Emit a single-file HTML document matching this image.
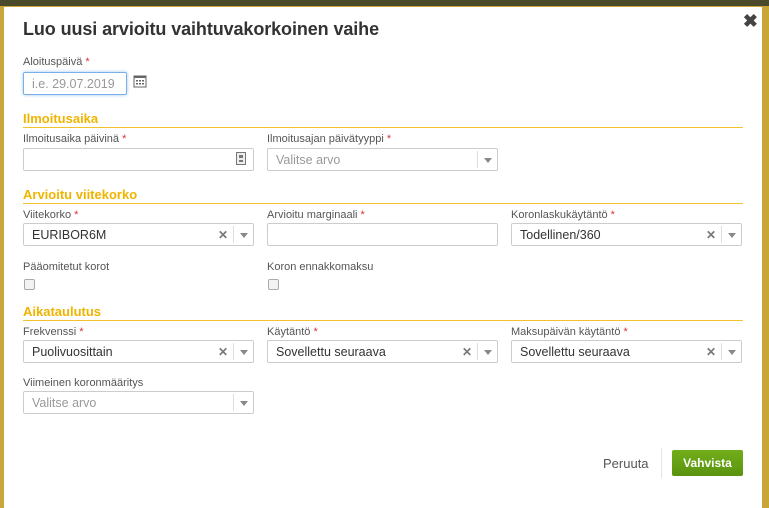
<!DOCTYPE html>
<html><head><meta charset="utf-8"><style>
*{box-sizing:border-box;margin:0;padding:0}
body{width:769px;height:508px;overflow:hidden;background:#c9a63a;font-family:"Liberation Sans",Arial,sans-serif;position:relative}
.top{position:absolute;left:0;top:0;width:769px;height:6px;background:#4a4a2a}
.modal{position:absolute;left:4px;top:7px;width:758px;height:501px;background:#fff}
.a{position:absolute}
h1{position:absolute;left:19px;top:12px;font-size:18px;font-weight:bold;color:#333;letter-spacing:-.1px}
.lbl{position:absolute;font-size:11px;color:#555}
.lbl i{color:#d33;font-style:normal}
.in{position:absolute;height:23px;border:1px solid #ccc;border-radius:2px;background:#fff;font-size:12.5px;color:#333;padding:4px 8px;line-height:14px}
.ph{color:#999}
.sec{position:absolute;left:19px;width:720px;font-size:13px;font-weight:bold;color:#f0b400;height:17px}
.sec:after{content:"";position:absolute;left:0;right:0;bottom:0;height:1px;background:#f2c22c}
.x{position:absolute;right:25px;top:4px;font-size:12px;font-weight:bold;color:#777}
.dd{position:absolute;right:0;top:2px;width:20px;height:17px;border-left:1px solid #ddd}
.dd:after{content:"";position:absolute;left:6px;top:7px;border:4px solid transparent;border-top:5px solid #888;border-bottom:0}
.cb{position:absolute;width:11px;height:11px;border:1px solid #aaa;border-radius:2px;background:#f3f3f3}
</style></head><body>
<div class="top"></div>
<div class="modal">
<h1>Luo uusi arvioitu vaihtuvakorkoinen vaihe</h1>
<div class="a" style="right:4px;top:4px;font-size:18px;font-weight:bold;color:#444">✖</div>
<div class="lbl" style="left:19px;top:49px">Aloituspäivä <i>*</i></div>
<div class="in" style="left:19px;top:65px;width:104px;height:23px;border-color:#79b0e8;box-shadow:0 0 3px #9cc6ef"><span class="ph">i.e. 29.07.2019</span></div>
<svg class="a" style="left:129px;top:67px" width="14" height="14" viewBox="0 0 14 14"><rect x="1" y="2" width="12" height="11" fill="none" stroke="#666"/><rect x="1" y="2" width="12" height="2" fill="#666"/><g fill="#666"><rect x="3" y="6" width="2" height="1.5"/><rect x="6" y="6" width="2" height="1.5"/><rect x="9" y="6" width="2" height="1.5"/><rect x="3" y="9" width="2" height="1.5"/><rect x="6" y="9" width="2" height="1.5"/><rect x="9" y="9" width="2" height="1.5"/></g></svg>

<div class="sec" style="top:104px">Ilmoitusaika</div>
<div class="lbl" style="left:19px;top:126px">Ilmoitusaika päivinä <i>*</i></div>
<div class="in" style="left:19px;top:141px;width:231px"></div>
<svg class="a" style="left:232px;top:145px" width="10" height="13"><rect x="0.5" y="0.5" width="9" height="12" fill="#eee" stroke="#777"/><rect x="3" y="3" width="4" height="3" fill="#777"/><rect x="3" y="8" width="4" height="2" fill="#777"/></svg>
<div class="lbl" style="left:263px;top:126px">Ilmoitusajan päivätyyppi <i>*</i></div>
<div class="in" style="left:263px;top:141px;width:231px"><span class="ph">Valitse arvo</span><div class="dd"></div></div>

<div class="sec" style="top:180px">Arvioitu viitekorko</div>
<div class="lbl" style="left:19px;top:202px">Viitekorko <i>*</i></div>
<div class="in" style="left:19px;top:216px;width:231px">EURIBOR6M<span class="x">✕</span><div class="dd"></div></div>
<div class="lbl" style="left:263px;top:202px">Arvioitu marginaali <i>*</i></div>
<div class="in" style="left:263px;top:216px;width:231px"></div>
<div class="lbl" style="left:507px;top:202px">Koronlaskukäytäntö <i>*</i></div>
<div class="in" style="left:507px;top:216px;width:231px">Todellinen/360<span class="x">✕</span><div class="dd"></div></div>
<div class="lbl" style="left:19px;top:254px">Pääomitetut korot</div>
<div class="cb" style="left:20px;top:272px"></div>
<div class="lbl" style="left:263px;top:254px">Koron ennakkomaksu</div>
<div class="cb" style="left:264px;top:272px"></div>

<div class="sec" style="top:297px">Aikataulutus</div>
<div class="lbl" style="left:19px;top:319px">Frekvenssi <i>*</i></div>
<div class="in" style="left:19px;top:333px;width:231px">Puolivuosittain<span class="x">✕</span><div class="dd"></div></div>
<div class="lbl" style="left:263px;top:319px">Käytäntö <i>*</i></div>
<div class="in" style="left:263px;top:333px;width:231px">Sovellettu seuraava<span class="x">✕</span><div class="dd"></div></div>
<div class="lbl" style="left:507px;top:319px">Maksupäivän käytäntö <i>*</i></div>
<div class="in" style="left:507px;top:333px;width:231px">Sovellettu seuraava<span class="x">✕</span><div class="dd"></div></div>
<div class="lbl" style="left:19px;top:370px">Viimeinen koronmääritys</div>
<div class="in" style="left:19px;top:384px;width:231px"><span class="ph">Valitse arvo</span><div class="dd"></div></div>

<div class="a" style="left:599px;top:449px;font-size:13px;color:#555">Peruuta</div>
<div class="a" style="left:657px;top:441px;width:1px;height:30px;background:#e4e4e4"></div>
<div class="a" style="left:668px;top:443px;width:71px;height:26px;background:linear-gradient(#72ad1a,#5a9410);border-radius:2px;color:#fff;font-size:12px;font-weight:bold;text-align:center;line-height:26px">Vahvista</div>
</div>
</body></html>
